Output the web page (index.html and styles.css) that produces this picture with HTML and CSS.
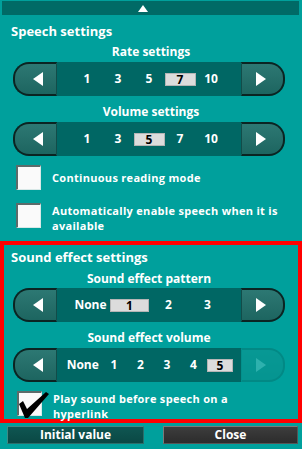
FILE: index.html
```html
<!DOCTYPE html>
<html>
<head>
<meta charset="utf-8">
<link rel="stylesheet" href="styles.css">
</head>
<body>
<div class="topbar"><span class="up"></span></div>

<div class="speech">
  <div class="title">Speech settings</div>
  <div class="label">Rate settings</div>
  <div class="slider">
    <div class="btn left"><span class="tri-l"></span></div>
    <div class="strip">
      <span class="v">1</span><span class="v">3</span><span class="v">5</span><span class="v"><b class="sel">7</b></span><span class="v">10</span>
    </div>
    <div class="btn right"><span class="tri-r"></span></div>
  </div>
  <div class="label gap8">Volume settings</div>
  <div class="slider">
    <div class="btn left"><span class="tri-l"></span></div>
    <div class="strip">
      <span class="v">1</span><span class="v">3</span><span class="v"><b class="sel">5</b></span><span class="v">7</span><span class="v">10</span>
    </div>
    <div class="btn right"><span class="tri-r"></span></div>
  </div>
  <div class="check row1">
    <span class="box"></span>
    <span class="ctext">Continuous reading mode</span>
  </div>
  <div class="check row2">
    <span class="box"></span>
    <span class="ctext">Automatically enable speech when it is<br>available</span>
  </div>
</div>

<div class="sound">
  <div class="title">Sound effect settings</div>
  <div class="label gap5">Sound effect pattern</div>
  <div class="slider s1">
    <div class="btn left"><span class="tri-l"></span></div>
    <div class="strip">
      <span class="v w39">None</span><span class="v w39"><b class="sel wide">1</b></span><span class="v w39">2</span><span class="v w39">3</span>
    </div>
    <div class="btn right"><span class="tri-r"></span></div>
  </div>
  <div class="label gap8">Sound effect volume</div>
  <div class="slider">
    <div class="btn left"><span class="tri-l"></span></div>
    <div class="strip">
      <span class="v wn">None</span><span class="v w26">1</span><span class="v w26">2</span><span class="v w26">3</span><span class="v w26">4</span><span class="v w26"><b class="sel narrow">5</b></span>
    </div>
    <div class="btn right disabled"><span class="tri-r"></span></div>
  </div>
  <div class="check row3">
    <span class="box">
      <svg class="tick" width="34" height="28" viewBox="0 0 34 28"><polygon points="1,11 5,8 9,16 28,-1 31,1 10,25 7,25" fill="#000"/></svg>
    </span>
    <span class="ctext">Play sound before speech on a<br>hyperlink</span>
  </div>
</div>

<div class="footer">
  <div class="fbtn init">Initial value</div>
  <div class="fbtn close">Close</div>
</div>
</body>
</html>
```
FILE: styles.css
```css
html, body {
  margin: 0;
  padding: 0;
}
body {
  width: 302px;
  height: 449px;
  overflow: hidden;
  background: #00a09c;
  color: #fff;
  font-family: "Open Sans", "DejaVu Sans", sans-serif;
  font-weight: 700;
}
.topbar {
  margin: 1px 3px 0 2px;
  height: 14px;
  background: #006a66;
  display: flex;
  align-items: center;
  padding-left: 136px;
  box-sizing: border-box;
}
.up {
  width: 0;
  height: 0;
  border-left: 5px solid transparent;
  border-right: 5px solid transparent;
  border-bottom: 7px solid #fff;
}
.speech {
  display: flex;
  flex-direction: column;
}
.title {
  font-size: 13px;
  line-height: 18px;
  margin-top: 7px;
  padding-left: 11px;
}
.sound .title {
  margin-top: 3px;
  padding-left: 7px;
}
.label {
  font-size: 12px;
  line-height: 16px;
  text-align: center;
  margin-top: 4px;
  margin-bottom: 2px;
}
.sound .label {
  padding-right: 4px;
}
.gap8 { margin-top: 8px; }
.gap5 { margin-top: 5px; margin-bottom: 1px; }
.slider {
  display: flex;
  margin-left: 13px;
  width: 272px;
  height: 34px;
}
.sound .slider {
  margin-left: 9px;
}
.btn {
  width: 44px;
  height: 34px;
  box-sizing: border-box;
  background: linear-gradient(#2d7873, #1d6560);
  border: 2px solid #0b2422;
  display: flex;
  align-items: center;
  justify-content: center;
}
.btn.left {
  border-radius: 16px 0 0 16px;
  border-right: 1px solid #124c49;
  padding-left: 4px;
}
.btn.right {
  border-radius: 0 16px 16px 0;
  border-left: 1px solid #124c49;
  padding-right: 4px;
}
.btn.disabled {
  opacity: 0.18;
}
.tri-l {
  width: 0;
  height: 0;
  border-top: 7px solid transparent;
  border-bottom: 7px solid transparent;
  border-right: 10px solid #fff;
}
.tri-r {
  width: 0;
  height: 0;
  border-top: 7px solid transparent;
  border-bottom: 7px solid transparent;
  border-left: 10px solid #fff;
}
.strip {
  flex: 1;
  background: #006764;
  display: flex;
  align-items: center;
  justify-content: center;
  font-size: 12px;
}
.v {
  width: 31px;
  display: flex;
  justify-content: center;
  line-height: 14px;
}
.w39 { width: 39px; }
.w26 { width: 26.5px; }
.wn { width: 36px; }
.sel {
  display: block;
  width: 32px;
  height: 13px;
  line-height: 11px;
  box-sizing: border-box;
  background: #dcdcdc;
  border: 1px solid #b5b5b5;
  color: #000;
  text-align: center;
  font-weight: 700;
}
.sel.wide { width: 39px; }
.sel.narrow { width: 26px; }
.check {
  display: flex;
  align-items: center;
  margin-left: 16px;
}
.sound .check { margin-left: 13px; }
.row1 { margin-top: 9px; }
.row2 { margin-top: 13px; align-items: flex-start; }
.row3 { margin-top: 9px; align-items: flex-start; }
.box {
  position: relative;
  width: 25px;
  height: 25px;
  box-sizing: border-box;
  background: #fafafa;
  border-top: 2px solid #5c6b6a;
  border-left: 2px solid #5c6b6a;
  border-right: 1px solid #d8e8e7;
  border-bottom: 1px solid #d8e8e7;
  flex: none;
}
.tick {
  position: absolute;
  left: -1px;
  top: 0;
  overflow: visible;
}
.ctext {
  margin-left: 11px;
  font-size: 11px;
  letter-spacing: 0.3px;
  line-height: 15px;
}
.sound {
  margin-top: 8px;
  border: 4px solid #ff0000;
  height: 182px;
  box-sizing: border-box;
  display: flex;
  flex-direction: column;
}
.footer {
  display: flex;
  margin-top: 3px;
  padding-left: 7px;
  gap: 19px;
}
.fbtn {
  height: 18px;
  box-sizing: border-box;
  font-size: 12px;
  line-height: 16px;
  text-align: center;
}
.init {
  width: 137px;
  background: linear-gradient(#0f5652, #0a4844);
  border: 1px solid #3f8a85;
  border-right-color: #2b6e6a;
  border-bottom-color: #2b6e6a;
}
.close {
  width: 135px;
  background: linear-gradient(#3d3d3d, #2c2c2c);
  border: 1px solid #7a7a7a;
  border-right-color: #555;
  border-bottom-color: #555;
}
```
